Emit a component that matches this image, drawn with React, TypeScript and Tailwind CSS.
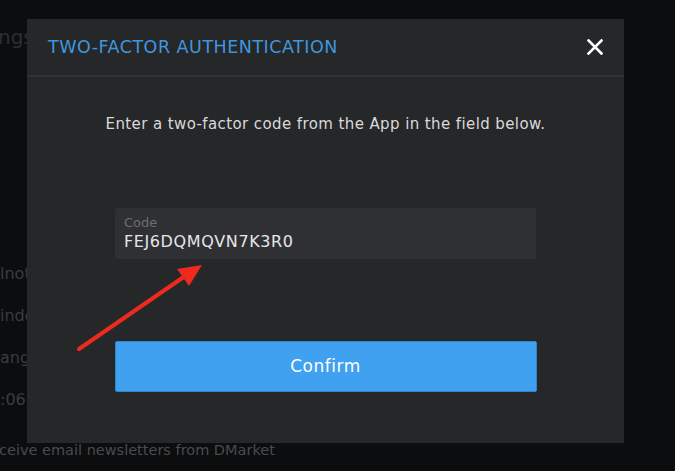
const font = { fontFamily: '"DejaVu Sans", "Noto Sans", sans-serif' };

const CloseIcon = () => (
  <svg width="16" height="16" viewBox="0 0 16 16" className="text-white">
    <path d="M1.5 1.5 L14.5 14.5 M14.5 1.5 L1.5 14.5" stroke="currentColor" strokeWidth="2.6" strokeLinecap="square" />
  </svg>
);

const App = () => {
  return (
    <div
      className="relative w-[675px] h-[471px] overflow-hidden bg-[#0b0d0e] text-[#3b3c3e]"
      style={font}
    >
      {/* page behind the dialog */}
      <div className="flex flex-col">
        <div className="w-[27px] overflow-hidden whitespace-nowrap mt-[24px] text-[20px] leading-[26px] text-[#2e2f31]">
          <span className="-ml-[2px]">ngs</span>
        </div>
        <div className="w-[27px] overflow-hidden whitespace-nowrap mt-[214px] flex flex-col gap-[22px] text-[16px] leading-[20px]">
          <span>lnotifications</span>
          <span>indow</span>
          <span>angle</span>
          <span>:06:00</span>
        </div>
        <div className="whitespace-nowrap mt-[31px] -ml-[1px] text-[14.5px] leading-[18px] text-[#4a4b4d]">
          ceive email newsletters from DMarket
        </div>
      </div>

      {/* dialog */}
      <div className="absolute left-[27px] top-[19px] w-[597px] h-[424px] bg-[#262729] flex flex-col">
        <div className="h-[58px] pl-[21px] pr-[21px] flex items-center justify-between border-b-2 border-[#303134]">
          <h2 className="text-[17.5px] tracking-[0.5px] text-[#3e97de]">TWO-FACTOR AUTHENTICATION</h2>
          <CloseIcon />
        </div>
        <div className="flex flex-col items-center pt-[37px]">
          <p className="text-[15px] leading-[20px] text-[#d9d9da] tracking-[0.4px]">
            Enter a two-factor code from the App in the field below.
          </p>
          <div className="mt-[74px] w-[421px] h-[51px] bg-[#2f3034] rounded-[2px] px-[9px] pt-[8px] flex flex-col">
            <span className="text-[13px] leading-[14px] text-[#6d6e71]">Code</span>
            <span className="mt-[2px] text-[16px] leading-[20px] text-[#e6e6e7] tracking-[0.6px]">
              FEJ6DQMQVN7K3R0
            </span>
          </div>
          <button className="mt-[82px] w-[422px] h-[51px] bg-[#40a1f0] border border-[#2f86cc] rounded-[2px] text-white text-[17px] tracking-[0.5px]">
            Confirm
          </button>
        </div>
      </div>

      {/* red annotation arrow */}
      <svg className="absolute inset-0 pointer-events-none" width="675" height="471" viewBox="0 0 675 471">
        <line x1="79" y1="349" x2="188" y2="274" stroke="#ee2a1f" strokeWidth="4" strokeLinecap="round" />
        <polygon points="202,265 177,269 189,286" fill="#ee2a1f" />
      </svg>
    </div>
  );
};

export default App;
